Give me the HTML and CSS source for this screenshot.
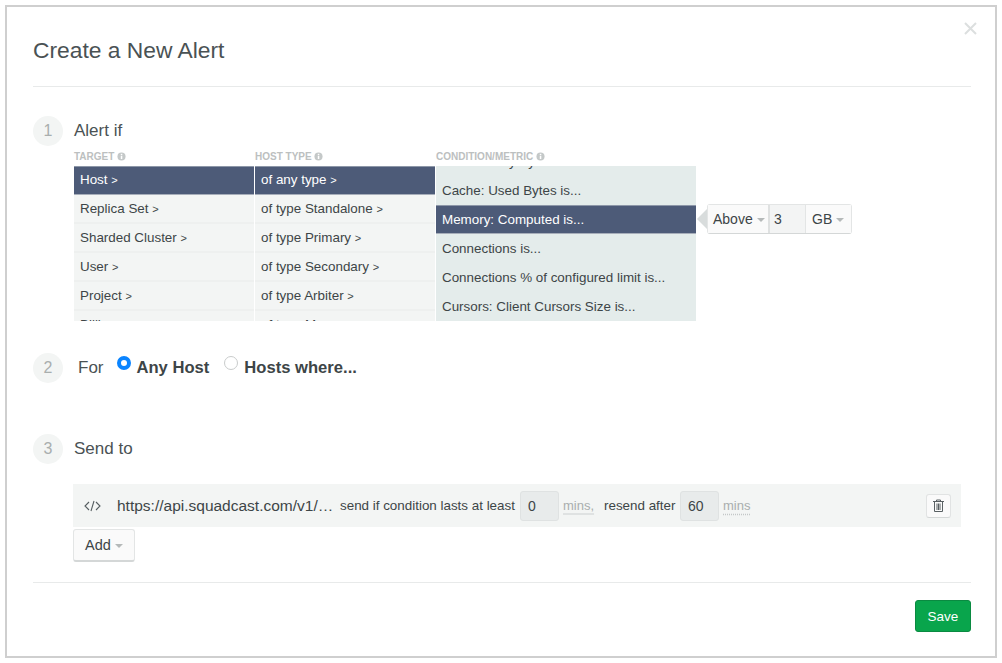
FILE: index.html
```html
<!DOCTYPE html>
<html lang="en">
<head>
  <meta charset="UTF-8" />
  <title>Create a New Alert</title>
  <link rel="stylesheet" href="styles.css">
</head>
<body>
  <div class="modal">
    <button class="close" aria-label="Close">
      <svg width="13" height="13" viewBox="0 0 13 13"><path d="M1 1l11 11M12 1L1 12" stroke="#dcdfdf" stroke-width="2" fill="none"/></svg>
    </button>
    <h1 class="title">Create a New Alert</h1>

    <section class="step step-alert">
      <div class="step-head">
        <span class="step-num">1</span>
        <span class="step-label">Alert if</span>
      </div>
      <div class="picker">
        <div class="picker-col col-target">
          <div class="col-title">TARGET <svg class="info" viewBox="0 0 10 10"><circle cx="5" cy="5" r="4.500" fill="#c4c8c8"/><rect x="4.200" y="4.200" width="1.700" height="3.600" fill="#fff"/><rect x="4.200" y="2" width="1.700" height="1.500" fill="#fff"/></svg></div>
          <ul class="col-list">
            <li class="active">Host <i>&gt;</i></li>
            <li>Replica Set <i>&gt;</i></li>
            <li>Sharded Cluster <i>&gt;</i></li>
            <li>User <i>&gt;</i></li>
            <li>Project <i>&gt;</i></li>
            <li>Billing <i>&gt;</i></li>
          </ul>
        </div>
        <div class="picker-col col-host">
          <div class="col-title">HOST TYPE <svg class="info" viewBox="0 0 10 10"><circle cx="5" cy="5" r="4.500" fill="#c4c8c8"/><rect x="4.200" y="4.200" width="1.700" height="3.600" fill="#fff"/><rect x="4.200" y="2" width="1.700" height="1.500" fill="#fff"/></svg></div>
          <ul class="col-list">
            <li class="active">of any type <i>&gt;</i></li>
            <li>of type Standalone <i>&gt;</i></li>
            <li>of type Primary <i>&gt;</i></li>
            <li>of type Secondary <i>&gt;</i></li>
            <li>of type Arbiter <i>&gt;</i></li>
            <li>of type Mongos <i>&gt;</i></li>
          </ul>
        </div>
        <div class="picker-col col-metric">
          <div class="col-title">CONDITION/METRIC <svg class="info" viewBox="0 0 10 10"><circle cx="5" cy="5" r="4.500" fill="#c4c8c8"/><rect x="4.200" y="4.200" width="1.700" height="3.600" fill="#fff"/><rect x="4.200" y="2" width="1.700" height="1.500" fill="#fff"/></svg></div>
          <ul class="col-list metric-list">
            <li>Cache: Dirty Bytes is...</li>
            <li>Cache: Used Bytes is...</li>
            <li class="active">Memory: Computed is...</li>
            <li>Connections is...</li>
            <li>Connections % of configured limit is...</li>
            <li>Cursors: Client Cursors Size is...</li>
          </ul>
        </div>
        <div class="threshold">
          <span class="arrow"></span>
          <div class="th-group">
            <span class="th-btn th-above">Above <b class="caret"></b></span>
            <span class="th-value">3</span>
            <span class="th-btn th-unit">GB <b class="caret"></b></span>
          </div>
        </div>
      </div>
    </section>

    <section class="step step-for">
      <span class="step-num">2</span>
      <span class="step-label for-label">For</span>
      <span class="radio on"></span>
      <span class="radio-text any">Any Host</span>
      <span class="radio"></span>
      <span class="radio-text">Hosts where...</span>
    </section>

    <section class="step step-send">
      <div class="step-head">
        <span class="step-num">3</span>
        <span class="step-label">Send to</span>
      </div>
      <div class="notify-row">
        <svg class="code-icon" width="17" height="12" viewBox="0 0 17 12"><path d="M5 2L1 6l4 4M12 2l4 4-4 4M10 1L7 11" stroke="#555d60" stroke-width="1.100" fill="none"/></svg>
        <span class="url">https://api.squadcast.com/v1/…</span>
        <span class="small send-if">send if condition lasts at least</span>
        <span class="num-input">0</span>
        <span class="mins solid">mins,</span>
        <span class="small resend">resend after</span>
        <span class="num-input">60</span>
        <span class="mins dotted">mins</span>
        <button class="trash" aria-label="Delete">
          <svg width="11" height="13" viewBox="0 0 11 13"><path d="M3.500 2V1h4v1M0 2.500h11M1.500 3v9.500h8V3M4 4.500v6.500M5.500 4.500v6.500M7 4.500v6.500" stroke="#596063" stroke-width="1" fill="none"/></svg>
        </button>
      </div>
      <button class="add-btn">Add <b class="caret"></b></button>
    </section>

    <div class="footer">
      <button class="save">Save</button>
    </div>
  </div>
</body>
</html>
```
FILE: styles.css
```css
html, body {
  margin: 0;
  padding: 0;
  background: #fff;
  overflow: hidden;
}
body {
  font-family: "Liberation Sans", Arial, sans-serif;
  color: #3d4547;
  padding: 5px;
}
ul {
  list-style: none;
  margin: 0;
  padding: 0;
}
button {
  font-family: inherit;
  cursor: pointer;
}
.modal {
  position: relative;
  box-sizing: border-box;
  width: 992px;
  height: 653px;
  border: 2px solid #cfcfcf;
  padding: 0 24px 0 26px;
  display: flex;
  flex-direction: column;
}
.close {
  position: absolute;
  top: 15px;
  right: 18px;
  padding: 0;
  border: none;
  background: none;
  line-height: 0;
}
.title {
  margin: 0;
  padding: 29px 0 21px;
  height: 29px;
  line-height: 29px;
  font-size: 22.800px;
  font-weight: 400;
  color: #4a5254;
  border-bottom: 1px solid #e8eaea;
}
.step-head {
  display: flex;
  align-items: center;
  gap: 11px;
}
.step-num {
  display: block;
  width: 30px;
  height: 30px;
  line-height: 30px;
  flex-shrink: 0;
  border-radius: 50%;
  background: #f3f5f4;
  color: #a9aeae;
  text-align: center;
  font-size: 16px;
}
.step-label {
  font-size: 17px;
  color: #4a5254;
}
.step-alert {
  padding-top: 29px;
}
.picker {
  display: flex;
  margin: 3px 0 0 41px;
  position: relative;
}
.picker-col {
  margin-right: 1px;
}
.col-target, .col-host { width: 180px; }
.col-metric { width: 260px; margin-right: 0; }
.col-title {
  height: 17px;
  line-height: 15px;
  font-size: 10px;
  font-weight: 700;
  color: #bcc0c0;
  white-space: nowrap;
}
.info {
  width: 9px;
  height: 9px;
  vertical-align: -1px;
}
.col-list {
  height: 155px;
  overflow: hidden;
  background: #f3f5f4;
  font-size: 13.400px;
}
.col-list li {
  box-sizing: border-box;
  height: 29px;
  line-height: 27px;
  padding-left: 6px;
  border-bottom: 2px solid #eef0ef;
  white-space: nowrap;
}
.col-list li i {
  font-style: normal;
  font-size: 11px;
}
.col-list li.active {
  background: #4d5b78;
  border-top: 1px solid #8d97a8;
  border-bottom: 1px solid #a7aeba;
  line-height: 26px;
  color: #fff;
}
.metric-list {
  background: #e4eceb;
}
.metric-list li {
  border-bottom: none;
  line-height: 29px;
  height: 29px;
}
.metric-list li.active {
  line-height: 27px;
}
.metric-list li:first-child {
  margin-top: -19px;
}
.threshold {
  display: flex;
  align-items: center;
  margin-top: 55px;
  height: 30px;
  margin-left: 1px;
}
.arrow {
  width: 0;
  height: 0;
  border: 10px solid transparent;
  border-left: none;
  border-right-color: #d8dcdc;
}
.th-group {
  display: flex;
  height: 30px;
  box-sizing: border-box;
  border: 1px solid #e3e5e5;
  border-bottom-color: #d4d7d7;
  border-radius: 3px;
  font-size: 14px;
  line-height: 28px;
}
.th-btn {
  background: #fafafa;
  padding: 0 5px;
  white-space: nowrap;
}
.th-above {
  width: 50px;
  border-right: 2px solid #dfe1e1;
}
.th-value {
  width: 31px;
  padding-left: 4px;
  background: #f3f4f4;
  border-right: 1px solid #e3e5e5;
}
.th-unit {
  padding-left: 6px;
  width: 34px;
}
.caret {
  display: inline-block;
  width: 0;
  height: 0;
  margin-left: 0;
  vertical-align: 2px;
  border: 4px solid transparent;
  border-bottom: none;
  border-top-color: #b5b9b9;
}
.step-for {
  display: flex;
  align-items: center;
  margin-top: 32px;
  height: 30px;
}
.for-label {
  margin-left: 15px;
  margin-right: 13px;
}
.radio {
  box-sizing: border-box;
  width: 14px;
  height: 14px;
  border-radius: 50%;
  border: 1px solid #c9cccc;
  margin-top: -11px;
  flex-shrink: 0;
  background: #fff;
}
.radio.on {
  border: 4.500px solid #0a84ff;
}
.radio-text {
  margin-left: 6px;
  font-size: 16.600px;
  font-weight: 700;
}
.radio-text.any {
  margin-right: 15px;
}
.step-send {
  margin-top: 51px;
}
.notify-row {
  display: flex;
  align-items: center;
  height: 43px;
  margin: 20px 10px 0 40px;
  background: #f3f5f4;
  position: relative;
}
.code-icon {
  margin-left: 11px;
  flex-shrink: 0;
}
.url {
  margin-left: 16px;
  width: 223px;
  font-size: 15.500px;
  white-space: nowrap;
}
.small {
  font-size: 13.400px;
  white-space: nowrap;
}
.send-if {
  width: 180px;
}
.num-input {
  box-sizing: border-box;
  width: 39px;
  height: 30px;
  line-height: 28px;
  padding-left: 7px;
  border: 1px solid #dfe2e2;
  border-radius: 3px;
  background: #e8ebeb;
  font-size: 14px;
}
.mins {
  margin-left: 4px;
  font-size: 13px;
  color: #a9aeae;
  line-height: 16px;
}
.mins.solid {
  width: 41px;
  text-decoration: underline;
  text-decoration-color: #dfe2e2;
  text-decoration-thickness: 2px;
  text-underline-offset: 3px;
}
.mins.dotted {
  text-decoration: underline dotted;
  text-decoration-color: #c4c8c8;
  text-underline-offset: 4px;
}
.resend {
  width: 76px;
}
.trash {
  margin-left: auto;
  margin-right: 10px;
  box-sizing: border-box;
  width: 25px;
  height: 24px;
  padding: 0;
  line-height: 0;
  background: #fafafa;
  border: 1px solid #e1e3e3;
  border-bottom-color: #d4d7d7;
  border-radius: 3px;
}
.add-btn {
  display: block;
  box-sizing: border-box;
  margin: 2px 0 0 40px;
  width: 62px;
  height: 33px;
  padding: 0;
  background: #fafafa;
  border: 1px solid #e3e5e5;
  border-bottom: 2px solid #d4d7d7;
  border-radius: 3px;
  font-size: 14.500px;
  color: #3d4547;
}
.footer {
  display: flex;
  justify-content: flex-end;
  margin-top: 20px;
  padding-top: 17px;
  border-top: 1px solid #e8eaea;
}
.save {
  box-sizing: border-box;
  width: 56px;
  height: 32px;
  padding: 0;
  background: #09a54c;
  border: 1px solid #0a8a41;
  border-radius: 3px;
  color: #fff;
  font-size: 13.500px;
}
```
